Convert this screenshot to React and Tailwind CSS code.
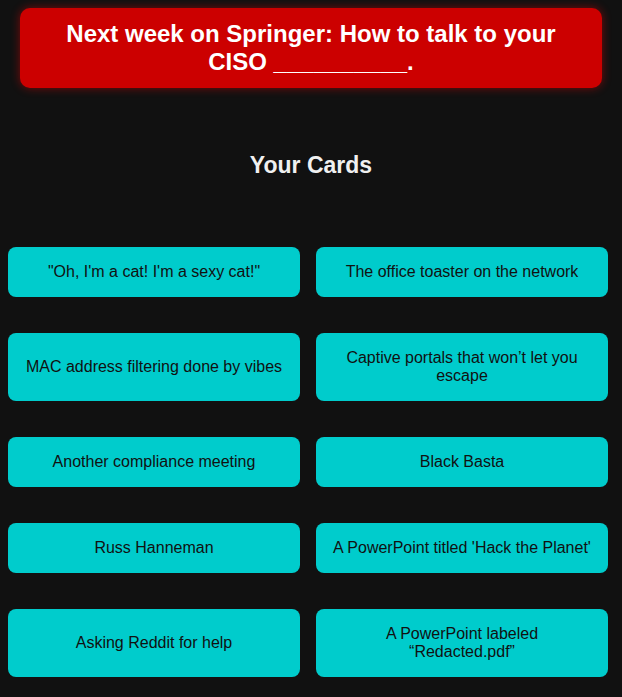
const cards = [
  '"Oh, I\'m a cat! I\'m a sexy cat!"',
  'The office toaster on the network',
  'MAC address filtering done by vibes',
  'Captive portals that won\u2019t let you escape',
  'Another compliance meeting',
  'Black Basta',
  'Russ Hanneman',
  "A PowerPoint titled 'Hack the Planet'",
  'Asking Reddit for help',
  'A PowerPoint labeled \u201cRedacted.pdf\u201d',
]

export default function App() {
  return (
    <div className="min-h-[697px] bg-[#111111] pt-2 pb-5 font-['Liberation_Sans',Arial,sans-serif]">
      <div className="mx-5 rounded-[10px] bg-[#cc0000] px-6 py-3 text-center text-2xl leading-[normal] font-bold text-white shadow-[0_0_10px_rgba(255,0,0,0.45)]">
        Next week on Springer: How to talk to your CISO __________.
      </div>

      <h2 className="mt-16 text-center text-[23px] leading-[normal] font-bold text-[#f0f0f0]">Your Cards</h2>

      <div className="mt-[68px] ml-2 grid w-[600px] grid-cols-2 gap-x-4 gap-y-9">
        {cards.map((c) => (
          <div key={c} className="flex items-center justify-center rounded-lg bg-[#00cccc] p-4 text-center text-base leading-[normal] text-[#111111]">
            {c}
          </div>
        ))}
      </div>
    </div>
  )
}
